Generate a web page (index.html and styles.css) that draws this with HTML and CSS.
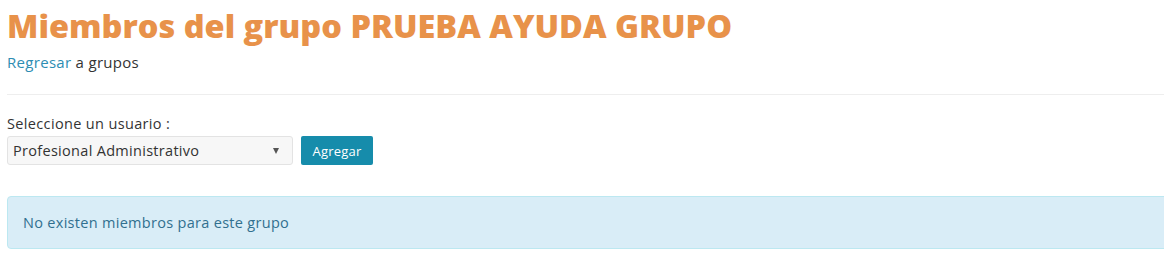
FILE: index.html
```html
<!DOCTYPE html>
<html lang="es">
<head>
<meta charset="utf-8">
<title>Miembros del grupo</title>
<link rel="stylesheet" href="styles.css">
</head>
<body>
<div class="page">
  <h1 class="title">Miembros del grupo PRUEBA AYUDA GRUPO</h1>
  <p class="back"><a href="#" class="link">Regresar</a> a grupos</p>
  <hr class="divider">
  <form class="add-form">
    <label class="label" for="usuario">Seleccione un usuario :</label>
    <div class="row">
      <div class="select" id="usuario">
        <span class="select-text">Profesional Administrativo</span>
        <span class="caret"></span>
      </div>
      <button type="button" class="btn">Agregar</button>
    </div>
  </form>
  <div class="alert">No existen miembros para este grupo</div>
</div>
</body>
</html>
```
FILE: styles.css
```css
html, body {
  margin: 0;
  padding: 0;
  background: #ffffff;
  overflow: hidden;
}
body {
  font-family: "Open Sans", "DejaVu Sans", sans-serif;
  color: #333333;
}
.page {
  width: 1180px;
  padding: 0 0 0 7px;
}
.title {
  margin: 0;
  padding-top: 6px;
  font-family: "Open Sans", "DejaVu Sans", sans-serif;
  font-weight: 800;
  font-size: 32.5px;
  line-height: 40px;
  color: #e8924a;
  letter-spacing: 0;
}
.back {
  margin: 6px 0 0;
  font-size: 15px;
  letter-spacing: 0.3px;
  line-height: 20px;
  color: #333;
}
.link {
  color: #2d8db3;
  text-decoration: none;
}
.divider {
  margin: 22px 0 0;
  border: 0;
  border-top: 1px solid #eeeeee;
  height: 0;
}
.add-form {
  margin-top: 19px;
}
.label {
  display: block;
  font-size: 14.5px;
  letter-spacing: 0.35px;
  line-height: 20px;
  color: #333;
}
.row {
  display: flex;
  gap: 8px;
  margin-top: 2px;
}
.select {
  box-sizing: border-box;
  width: 286px;
  height: 29px;
  border: 1px solid #e3e3e3;
  border-radius: 3px;
  background: #f7f7f7;
  display: flex;
  align-items: center;
  justify-content: space-between;
  padding: 0 13px 0 5px;
  font-size: 14.5px;
  letter-spacing: 0.3px;
  color: #333;
}
.caret {
  width: 0;
  height: 0;
  border-left: 3.5px solid transparent;
  border-right: 3.5px solid transparent;
  border-top: 6px solid #555;
}
.btn {
  box-sizing: border-box;
  width: 72px;
  height: 29px;
  border: 0;
  border-radius: 2px;
  background: #168cab;
  color: #ffffff;
  font-family: "Open Sans", sans-serif;
  font-size: 13px;
  letter-spacing: 0.2px;
  padding: 0;
}
.alert {
  box-sizing: border-box;
  margin-top: 31px;
  height: 53px;
  background: #d9edf7;
  border: 1px solid #bce8f1;
  border-radius: 4px;
  color: #31708f;
  font-size: 14.5px;
  letter-spacing: 0.3px;
  padding: 0 15px;
  display: flex;
  align-items: center;
}
```
